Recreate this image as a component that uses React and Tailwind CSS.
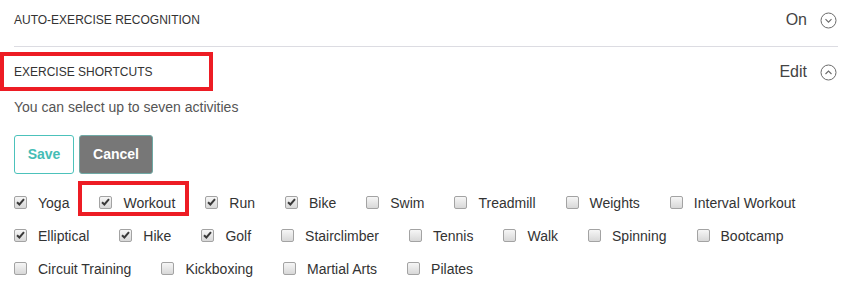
import React from "react";

const rows = [
  [
    ["Yoga", true],
    ["Workout", true],
    ["Run", true],
    ["Bike", true],
    ["Swim", false],
    ["Treadmill", false],
    ["Weights", false],
    ["Interval Workout", false],
  ],
  [
    ["Elliptical", true],
    ["Hike", true],
    ["Golf", true],
    ["Stairclimber", false],
    ["Tennis", false],
    ["Walk", false],
    ["Spinning", false],
    ["Bootcamp", false],
  ],
  [
    ["Circuit Training", false],
    ["Kickboxing", false],
    ["Martial Arts", false],
    ["Pilates", false],
  ],
];

function CircleChevron({ up }) {
  return (
    <svg width="17" height="17" viewBox="0 0 17 17" fill="none">
      <circle cx="8.5" cy="8.5" r="7.5" stroke="#6b6b6b" strokeWidth="1" />
      {up ? (
        <path d="M5.5 10 L8.5 7 L11.5 10" stroke="#6b6b6b" strokeWidth="1.1" />
      ) : (
        <path d="M5.5 7.2 L8.5 10.2 L11.5 7.2" stroke="#6b6b6b" strokeWidth="1.1" />
      )}
    </svg>
  );
}

function Check({ checked }) {
  return (
    <span className="flex h-[13px] w-[13px] shrink-0 items-center justify-center rounded-[2px] border border-[#a3a3a3] bg-gradient-to-b from-[#f6f6f6] to-[#d8d8d8] -mt-[3px]">
      {checked && (
        <svg width="9" height="8" viewBox="0 0 9 8">
          <path d="M1 4.2 L3.4 6.5 L8 1.2" stroke="#3a3a3a" strokeWidth="2" fill="none" />
        </svg>
      )}
    </span>
  );
}

export default function App() {
  return (
    <div
      className="relative w-[853px] h-[282px] bg-white pl-[14px] pr-[15px] text-[#333]"
      style={{ fontFamily: '"Liberation Sans", Arial, sans-serif' }}
    >
      <div className="flex h-[40px] items-center justify-between">
        <span className="text-[12px] uppercase text-[#333]">Auto-Exercise Recognition</span>
        <div className="flex items-center gap-[13px] pr-[1px]">
          <span className="text-[16px] text-[#444]">On</span>
          <CircleChevron />
        </div>
      </div>
      <div className="mt-[6px] h-px bg-[#dcdce2]" />

      <div className="flex h-[50px] items-center justify-between">
        <span className="text-[12px] uppercase text-[#333]">Exercise Shortcuts</span>
        <div className="flex items-center gap-[13px] pr-[1px]">
          <span className="text-[16px] text-[#444]">Edit</span>
          <CircleChevron up />
        </div>
      </div>
      <p className="pt-[1px] text-[14px] leading-[18px] text-[#555]">You can select up to seven activities</p>

      <div className="mt-[19px] flex gap-[5px]">
        <button className="h-[39px] w-[60px] rounded-[3px] border border-[#4cc2bb] bg-white text-[14px] font-bold text-[#45bdb5]">
          Save
        </button>
        <button className="h-[39px] w-[74px] rounded-[3px] border border-[#6fa9a5] bg-[#777] text-[14px] font-bold text-white">
          Cancel
        </button>
      </div>

      <div className="mt-[13px]">
        {rows.map((row, i) => (
          <div key={i} className="flex h-[33px] items-center gap-[30px]">
            {row.map(([label, checked]) => (
              <label key={label} className="flex items-center gap-[11px] text-[14px] text-[#333]">
                <Check checked={checked} />
                <span>{label}</span>
              </label>
            ))}
          </div>
        ))}
      </div>

      <div className="pointer-events-none absolute left-0 top-[52px] h-[39px] w-[213px] border-4 border-[#ed1c24]" />
      <div className="pointer-events-none absolute left-[78px] top-[181px] h-[35px] w-[111px] border-4 border-[#ed1c24]" />
    </div>
  );
}
